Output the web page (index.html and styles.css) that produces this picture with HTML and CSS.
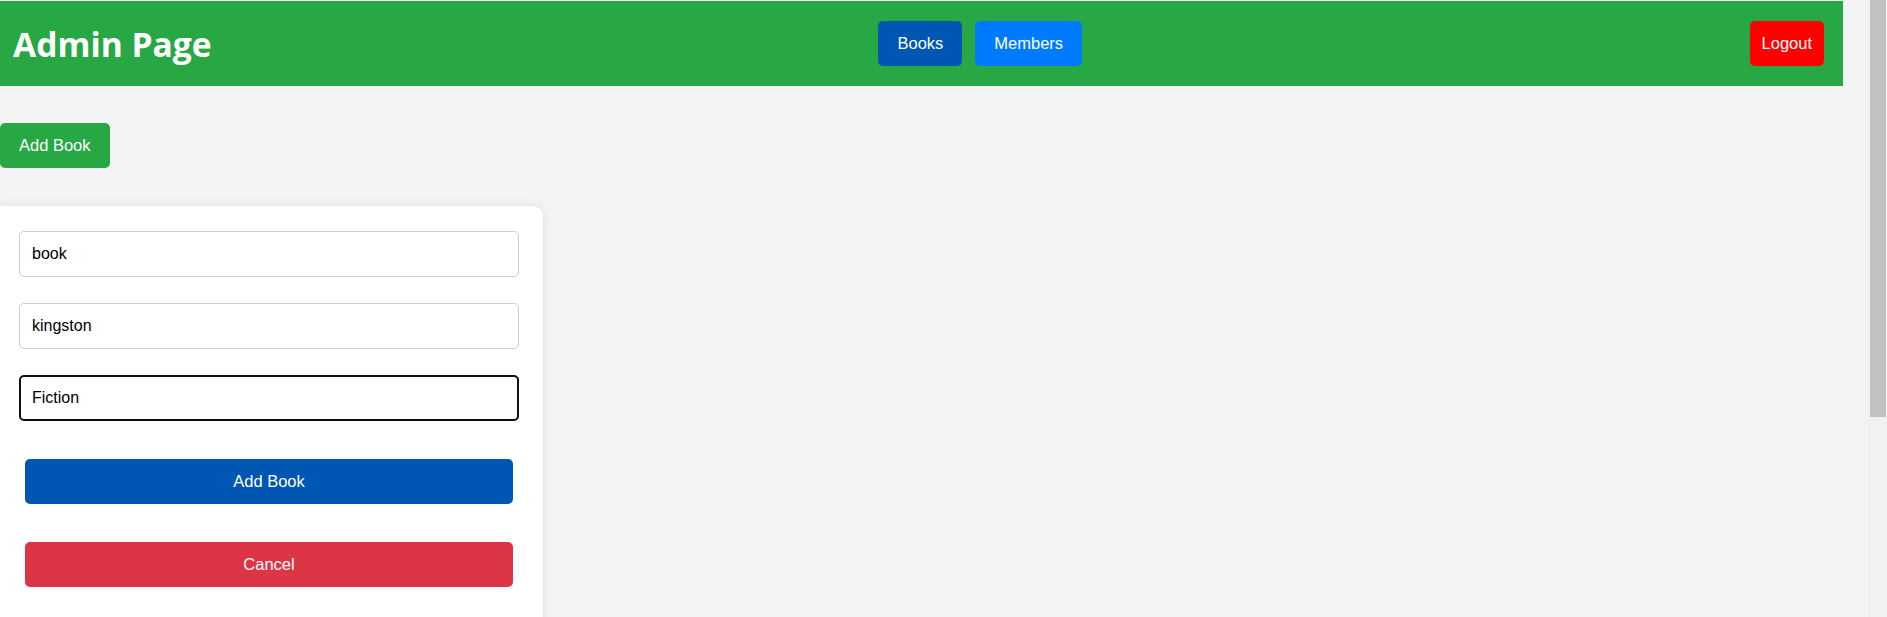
FILE: index.html
```html
<!DOCTYPE html>
<html lang="en">
<head>
<meta charset="utf-8">
<title>Admin Page</title>
<link rel="stylesheet" href="styles.css">
</head>
<body>
  <header class="topbar">
    <h1 class="title">Admin Page</h1>
    <nav class="nav">
      <button class="btn btn-books">Books</button>
      <button class="btn btn-members">Members</button>
    </nav>
    <button class="btn btn-logout">Logout</button>
  </header>

  <main class="content">
    <button class="btn btn-add">Add Book</button>

    <form class="card">
      <input class="field" type="text" value="book">
      <input class="field" type="text" value="kingston">
      <input class="field field-focus" type="text" value="Fiction">
      <button type="button" class="btn btn-submit">Add Book</button>
      <button type="button" class="btn btn-cancel">Cancel</button>
    </form>
  </main>

  <div class="scrollbar"><div class="scrollbar-thumb"></div></div>
</body>
</html>
```

FILE: styles.css
```css
body {
  margin: 0 19px 0 0;
  background: #f4f4f4;
  font-family: "Liberation Sans", Arial, sans-serif;
  font-size: 16px;
}

.scrollbar {
  position: fixed;
  top: 0;
  right: 0;
  width: 19px;
  height: 100vh;
  background: #f1f1f1;
}

.scrollbar-thumb {
  margin-left: 2px;
  width: 16px;
  height: 417px;
  background: #c1c1c1;
}

.topbar {
  margin: 1px 25px 0 0;
  height: 85px;
  background: #28a745;
  display: flex;
  align-items: center;
  justify-content: space-between;
  padding: 0 19px 0 13px;
}

.title {
  margin: 0;
  width: 198px;
  white-space: nowrap;
  color: #fff;
  font-family: "Open Sans", "Noto Sans", sans-serif;
  font-weight: 700;
  font-size: 33.6px;
}

.nav {
  display: flex;
  gap: 13px;
}

.btn {
  border: none;
  color: #fff;
  font-family: "Liberation Sans", Arial, sans-serif;
  font-size: 16.5px;
  height: 45px;
  border-radius: 5px;
  padding: 0 19px;
  cursor: pointer;
}

.btn-books { background: #0056b3; }
.btn-members { background: #007bff; }
.btn-logout { background: #ff0000; padding: 0 12px; }

.content {
  padding-top: 37px;
  padding-bottom: 20px;
}

.btn-add {
  display: block;
  background: #28a745;
  margin: 0 0 38px 0;
}

.card {
  width: 543px;
  box-sizing: border-box;
  background: #fff;
  border-radius: 0 10px 10px 0;
  box-shadow: 0 0 10px rgba(0, 0, 0, 0.1);
  padding: 25px 24px 306px 19px;
  display: flex;
  flex-direction: column;
}

.field {
  height: 46px;
  box-sizing: border-box;
  border: 1px solid #ccc;
  border-radius: 5px;
  padding: 0 12px;
  font-family: "Liberation Sans", Arial, sans-serif;
  font-size: 16px;
  color: #000;
  margin-bottom: 26px;
  outline: none;
}

.field-focus {
  border: 2px solid #101010;
  padding: 0 11px;
}

.btn-submit {
  margin: 12px 6px 0;
  background: #0056b3;
}

.btn-cancel {
  margin: 38px 6px 0;
  background: #dc3545;
}
```
